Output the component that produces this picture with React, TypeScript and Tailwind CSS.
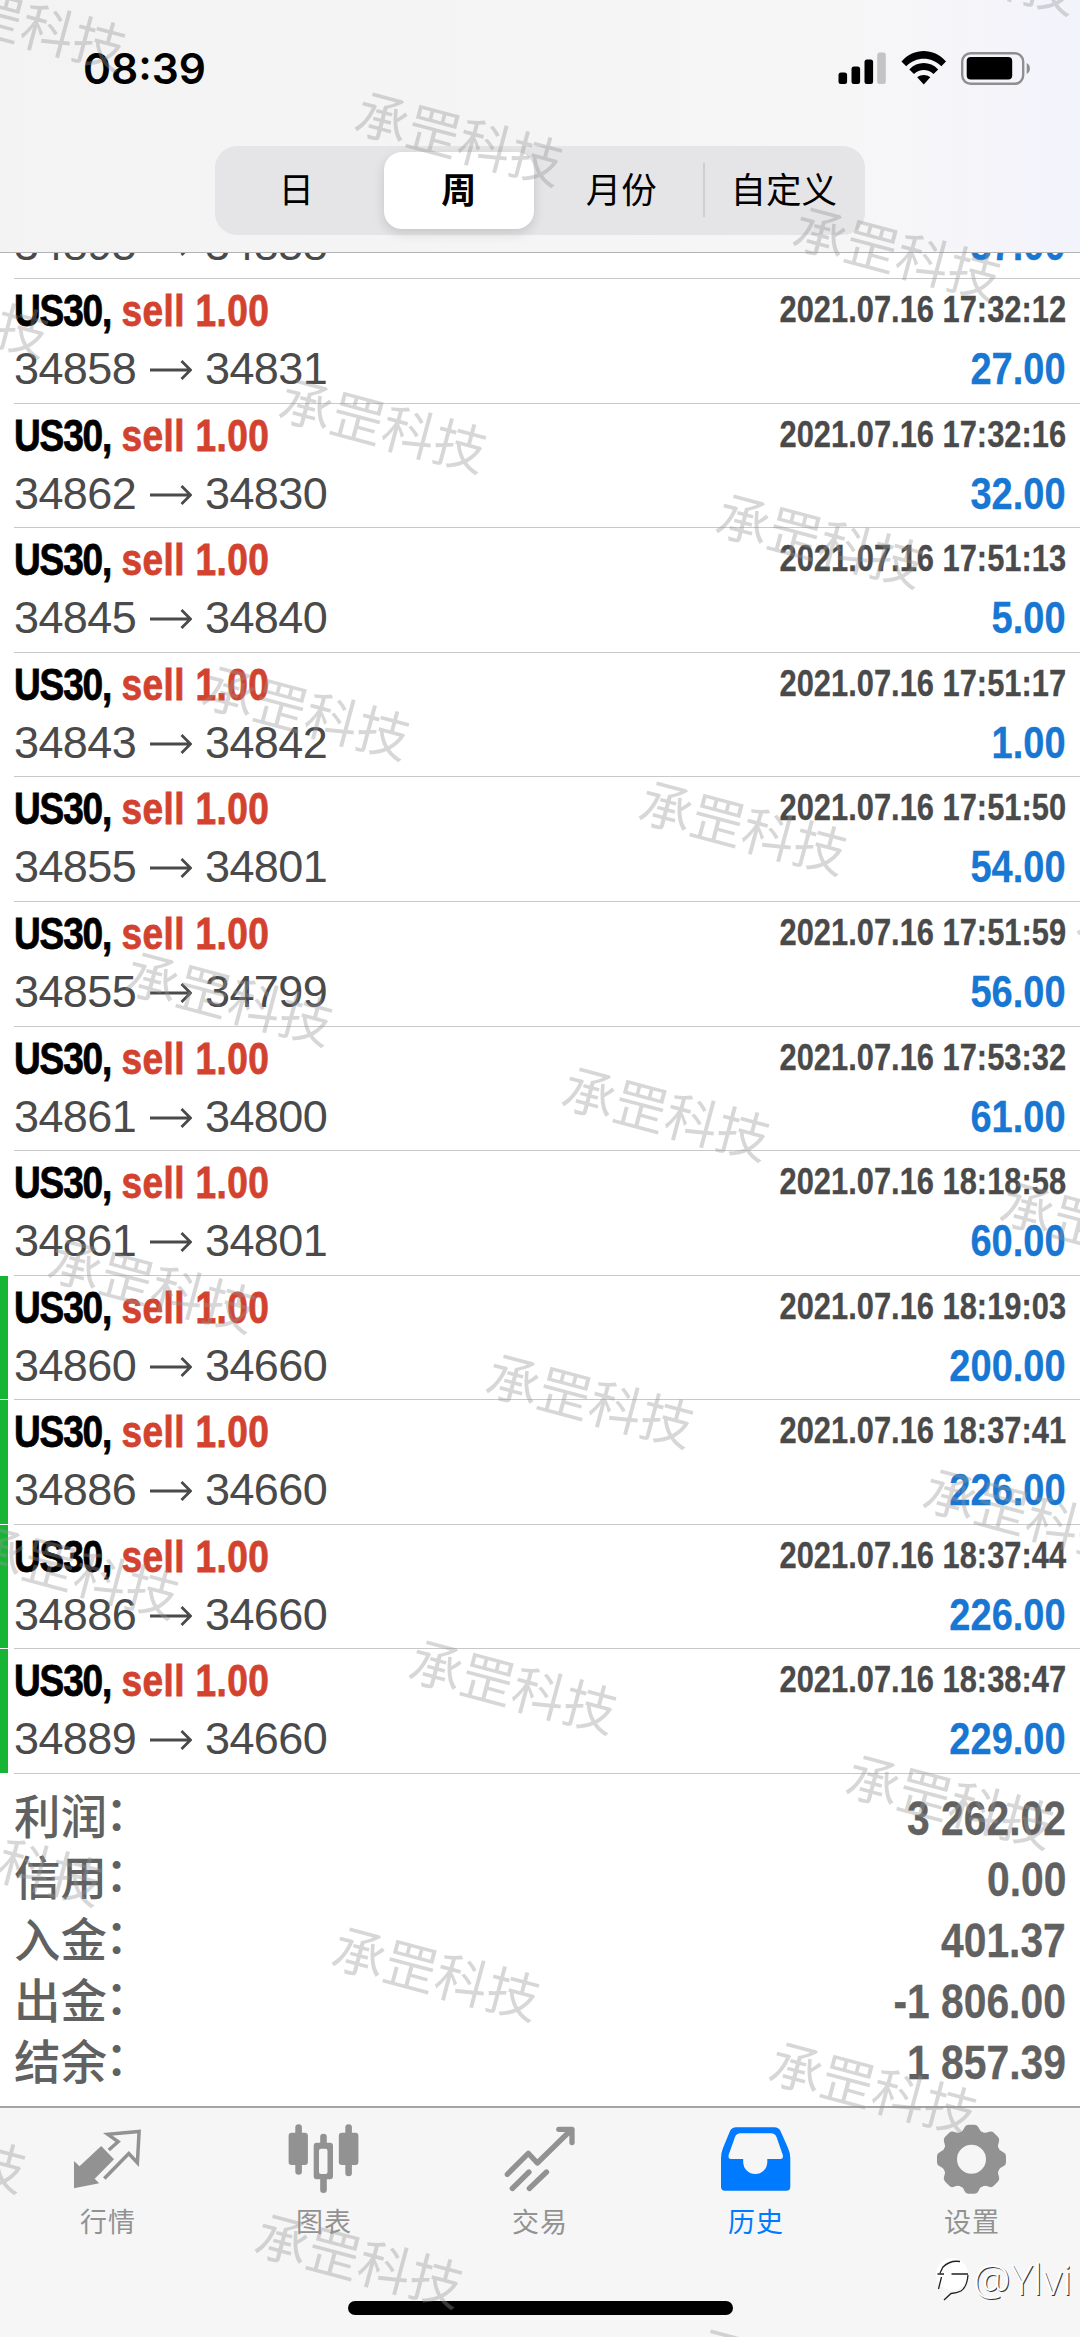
import type { ReactNode } from "react";

interface Deal {
  open: number;
  close: number;
  time: string;
  profit: string;
  takeProfit?: boolean;
}

const deals: Deal[] = [
  { open: 34895, close: 34858, time: "2021.07.16 17:32:08", profit: "37.00" },
  { open: 34858, close: 34831, time: "2021.07.16 17:32:12", profit: "27.00" },
  { open: 34862, close: 34830, time: "2021.07.16 17:32:16", profit: "32.00" },
  { open: 34845, close: 34840, time: "2021.07.16 17:51:13", profit: "5.00" },
  { open: 34843, close: 34842, time: "2021.07.16 17:51:17", profit: "1.00" },
  { open: 34855, close: 34801, time: "2021.07.16 17:51:50", profit: "54.00" },
  { open: 34855, close: 34799, time: "2021.07.16 17:51:59", profit: "56.00" },
  { open: 34861, close: 34800, time: "2021.07.16 17:53:32", profit: "61.00" },
  { open: 34861, close: 34801, time: "2021.07.16 18:18:58", profit: "60.00" },
  { open: 34860, close: 34660, time: "2021.07.16 18:19:03", profit: "200.00", takeProfit: true },
  { open: 34886, close: 34660, time: "2021.07.16 18:37:41", profit: "226.00", takeProfit: true },
  { open: 34886, close: 34660, time: "2021.07.16 18:37:44", profit: "226.00", takeProfit: true },
  { open: 34889, close: 34660, time: "2021.07.16 18:38:47", profit: "229.00", takeProfit: true },
];

const totals = [
  { label: "利润", value: "3 262.02" },
  { label: "信用", value: "0.00" },
  { label: "入金", value: "401.37" },
  { label: "出金", value: "-1 806.00" },
  { label: "结余", value: "1 857.39" },
];

const periods = ["日", "周", "月份", "自定义"];

function StatusBar() {
  return (
    <div className="flex h-[146px] items-start justify-between pl-[83px] pr-[48px] pt-[51px]">
      <span className="font-['Inter',sans-serif] text-[42.5px] font-semibold leading-[36px] text-black">
        08:39
      </span>
      <div className="flex">
        <svg width="48" height="36" viewBox="0 0 48 36">
          <rect x="0.5" y="21.5" width="8.6" height="11.5" rx="2.5" />
          <rect x="13.5" y="15.5" width="8.6" height="17.5" rx="2.5" />
          <rect x="26.5" y="8.5" width="8.6" height="24.5" rx="2.5" />
          <rect x="39.2" y="1.5" width="8.6" height="31.5" rx="2.5" fill="#c4c4c4" />
        </svg>
        <svg className="ml-[15px]" width="46" height="36" viewBox="0 0 46 36">
          <path d="M0.5 10.5C13 -3.4 32.5 -3.4 45 10.5L40.3 15.2C30.5 5.2 15 5.2 5.2 15.2Z" />
          <path d="M8.3 18.4C16.5 10 29 10 37.2 18.4L32.5 23C27 17.8 18.5 17.8 13 23Z" />
          <path d="M16.2 26.3C20.2 23.2 25.3 23.2 29.3 26.3L22.75 33.5Z" />
        </svg>
        <svg className="ml-[14px]" width="71" height="36" viewBox="0 0 71 36">
          <rect x="1.2" y="2.2" width="61" height="30.6" rx="8.5" fill="none" stroke="#8f8f91" strokeWidth="2.4" />
          <rect x="5.7" y="6" width="45.5" height="22.5" rx="4" />
          <path d="M65.7 12C70 14 70 21 65.7 23Z" fill="#8f8f91" />
        </svg>
      </div>
    </div>
  );
}

function PeriodSwitch({ active }: { active: string }) {
  return (
    <div className="mx-auto flex h-[89px] w-[650px] rounded-[22px] bg-[#e5e4e6]">
      {periods.map((period, i) => (
        <div key={period} className="relative flex flex-1 items-center justify-center p-[6px]">
          {i === 3 && <i className="absolute left-0 top-[17px] h-[54px] w-[2px] bg-[#cfcfd2]" />}
          <span
            className={
              period === active
                ? "flex h-full w-full items-center justify-center rounded-[18px] bg-white pt-[2px] text-[35px] font-bold text-black shadow-[0_4px_12px_rgba(0,0,0,0.14)]"
                : "pt-[3px] text-[35.5px] text-black"
            }
          >
            {period}
          </span>
        </div>
      ))}
    </div>
  );
}

function DealRow({ deal }: { deal: Deal }) {
  return (
    <li className="flex h-[124.58px]">
      <span className={deal.takeProfit ? "mb-px w-2 bg-[#17b536]" : "w-2"} />
      <div className="ml-[6px] flex flex-1 justify-between border-b border-[#c8c7cc] pr-[14px]">
        <div className="pt-[8px]">
          <p className="h-[48px] origin-left scale-x-[0.823] whitespace-nowrap text-[45px] font-bold leading-[48px] text-black [-webkit-text-stroke:0.8px]">
            <span className="tracking-[-1.4px]">US30,</span>{" "}
            <span className="tracking-[0.5px] text-[#d2422f]">sell 1.00</span>
          </p>
          <p className="mt-[10px] flex h-[48px] items-center text-[45px] leading-[48px] tracking-[-0.6px] text-[#4a4a4a]">
            <span className="w-[136px]">{deal.open}</span>
            <svg className="mr-[13px] mt-[2px]" width="42" height="20" viewBox="0 0 42 20">
              <path d="M0 10H40M31.5 1L40.5 10L31.5 19" fill="none" stroke="#4a4a4a" strokeWidth="2.8" />
            </svg>
            <span>{deal.close}</span>
          </p>
        </div>
        <div className="flex flex-col items-end pt-[11px]">
          <p className="h-[39px] origin-right scale-x-[0.85] whitespace-nowrap text-[36.3px] font-bold leading-[39px] text-[#4a4a4a] [-webkit-text-stroke:0.3px]">
            {deal.time}
          </p>
          <p className="mt-[16px] h-[48px] origin-right scale-x-[0.845] text-[45px] font-bold leading-[48px] text-[#1777d2] [-webkit-text-stroke:0.3px]">
            {deal.profit}
          </p>
        </div>
      </div>
    </li>
  );
}

function QuotesIcon() {
  return (
    <>
      <path d="M6 39L11.5 44.3L33.2 24L46 37.3L26.7 56.7L31.2 61.3L6 66.3Z" fill="currentColor" />
      <path d="M40.8 28L50.1 19.7L39.8 12.3L71.1 9.5L69.4 40.7L60.8 31.5L36.3 56.5" fill="none" stroke="currentColor" strokeWidth="3.5" />
    </>
  );
}

function ChartIcon() {
  return (
    <g fill="currentColor">
      <rect x="4.6" y="10.7" width="19.3" height="32.3" rx="3" />
      <rect x="11.3" y="2.3" width="6.6" height="50.5" rx="3.3" />
      <rect x="54.8" y="10.7" width="19.6" height="32.3" rx="3" />
      <rect x="61.3" y="2.3" width="6.6" height="52" rx="3.3" />
      <rect x="36.2" y="11.7" width="6.6" height="14" rx="3.3" />
      <rect x="36.2" y="53" width="6.6" height="18" rx="3.3" />
      <path fillRule="evenodd" d="M32.7 20.7H46a3 3 0 0 1 3 3V54.3a3 3 0 0 1-3 3H32.7a3 3 0 0 1-3-3V23.7a3 3 0 0 1 3-3ZM37 26.7a2 2 0 0 0-2 2V50a2 2 0 0 0 2 2H41.5a2 2 0 0 0 2-2V28.7a2 2 0 0 0-2-2Z" />
    </g>
  );
}

function TradeIcon() {
  return (
    <g fill="none" stroke="currentColor" strokeWidth="5.3" strokeLinecap="round">
      <path d="M7.3 52.3L28.3 31.3L37.3 41L71.5 7.5M58.8 7.3H72V20.5" strokeLinejoin="round" />
      <path d="M12.3 66.5L29 50M29.3 66.5L46.5 50" />
    </g>
  );
}

function HistoryIcon() {
  return (
    <path
      fill="currentColor"
      fillRule="evenodd"
      d="M20 5.3H58.5Q62.5 5.3 64.5 9L72 26Q74.300 31 74.3 36V64.700a4 4 0 0 1-4 4H9a4 4 0 0 1-4-4V36Q5 31 7 26L14 9Q16 5.3 20 5.3ZM24.500 11.3Q20.500 11.3 19 15L12.6 33Q12 37 15 37H27.2V40a12 12 0 0 0 24.1 0V37H64.5Q67.5 37 66.8 33L60.500 15Q59 11.3 55 11.3Z"
    />
  );
}

function GearIcon() {
  return (
    <g>
      <circle cx="39.5" cy="37.3" r="21.8" fill="none" stroke="currentColor" strokeWidth="14.6" />
      <g fill="currentColor">
        {[0, 45, 90, 135, 180, 225, 270, 315].map((deg) => (
          <path
            key={deg}
            transform={`rotate(${deg} 39.5 37.3)`}
            d="M27.500 11Q31 9.500 32.500 5.500Q33.500 2.800 36.500 2.800H42.500Q45.500 2.800 46.500 5.500Q48 9.500 51.500 11L46 17H33Z"
          />
        ))}
      </g>
    </g>
  );
}

const tabs: { label: string; icon: ReactNode; active?: boolean }[] = [
  { label: "行情", icon: <QuotesIcon /> },
  { label: "图表", icon: <ChartIcon /> },
  { label: "交易", icon: <TradeIcon /> },
  { label: "历史", icon: <HistoryIcon />, active: true },
  { label: "设置", icon: <GearIcon /> },
];

function TabBar() {
  return (
    <nav className="flex h-[231px] flex-col border-t-2 border-[#a5a5a2] bg-[#f6f6f6]">
      <div className="flex pt-[14px]">
        {tabs.map((tab) => (
          <div
            key={tab.label}
            className={
              tab.active
                ? "flex flex-1 flex-col items-center text-[#007aff]"
                : "flex flex-1 flex-col items-center text-[#929292]"
            }
          >
            <svg width="80" height="74" viewBox="0 0 80 74">
              {tab.icon}
            </svg>
            <span className="mt-[9px] text-[27px] leading-[36px] tracking-[1px]">{tab.label}</span>
          </div>
        ))}
      </div>
      <div className="mx-auto mt-[60px] h-[14px] w-[385px] rounded-full bg-black" />
    </nav>
  );
}

// Tilted lattice: one step along the text line, one step below it
const marks: { x: number; y: number }[] = [];
for (let row = -3; row <= 9; row++) {
  for (let col = -2; col <= 3; col++) {
    const x = 382.5 + col * 437.4 - row * 76.8;
    const y = 427 + col * 115 + row * 286.6;
    if (x > -130 && x < 1210 && y > -80 && y < 2417) marks.push({ x, y });
  }
}

function Watermarks() {
  return (
    <div className="pointer-events-none absolute inset-0 overflow-hidden">
      {marks.map(({ x, y }) => (
        <span
          key={`${x}-${y}`}
          className="absolute -translate-x-1/2 -translate-y-1/2 rotate-[15deg] whitespace-nowrap text-[53px] leading-none text-[#969696]/38"
          style={{ left: x, top: y }}
        >
          承罡科技
        </span>
      ))}
    </div>
  );
}

function AuthorTag() {
  return (
    <div className="absolute bottom-[35px] right-[8px] flex items-center text-white">
      <svg className="mr-[3px]" width="34" height="46" viewBox="0 0 34 46">
        <circle cx="16" cy="18" r="16" fill="#fff" />
        <path
          d="M4 17L7 11Q14 4 24 5.5M1.5 18H8M15.5 18H32M32 19Q31 31 25 35Q21 37 15 37.5L8 44M5.5 21L2.5 33"
          fill="none"
          stroke="#222"
          strokeWidth="1.3"
        />
      </svg>
      <span className="font-['Noto_Sans',sans-serif] text-[42px] font-light leading-[46px] [text-shadow:1px_1px_0_#333]">
        @Ylvi
      </span>
    </div>
  );
}

export default function App() {
  return (
    <div className="relative flex h-[2337px] w-[1080px] flex-col overflow-hidden bg-white font-['Liberation_Sans','Noto_Sans_CJK_SC',sans-serif]">
      <header className="h-[253px] shrink-0 border-b border-[#b4b4b6] bg-linear-to-r from-[#f4f3f3] via-[#f7f6f7] via-80% to-[#f3f3fc]">
        <StatusBar />
        <PeriodSwitch active="周" />
      </header>
      <main className="flex-1 overflow-hidden">
        <ul className="-mt-[98.5px]">
          {deals.map((deal) => (
            <DealRow key={deal.time} deal={deal} />
          ))}
        </ul>
        <dl className="pl-[14px] pr-[14px] pt-[14px] text-[#616161]">
          {totals.map((total) => (
            <div key={total.label} className="flex h-[61.1px] items-center justify-between">
              <dt className="text-[46.5px] font-medium leading-none">
                {total.label}
                <span className="relative -left-[2px] -top-[4px]">：</span>
              </dt>
              <dd className="origin-right scale-x-[0.85] text-[48px] font-bold leading-none [-webkit-text-stroke:0.3px]">
                {total.value}
              </dd>
            </div>
          ))}
        </dl>
      </main>
      <TabBar />
      <Watermarks />
      <AuthorTag />
    </div>
  );
}
